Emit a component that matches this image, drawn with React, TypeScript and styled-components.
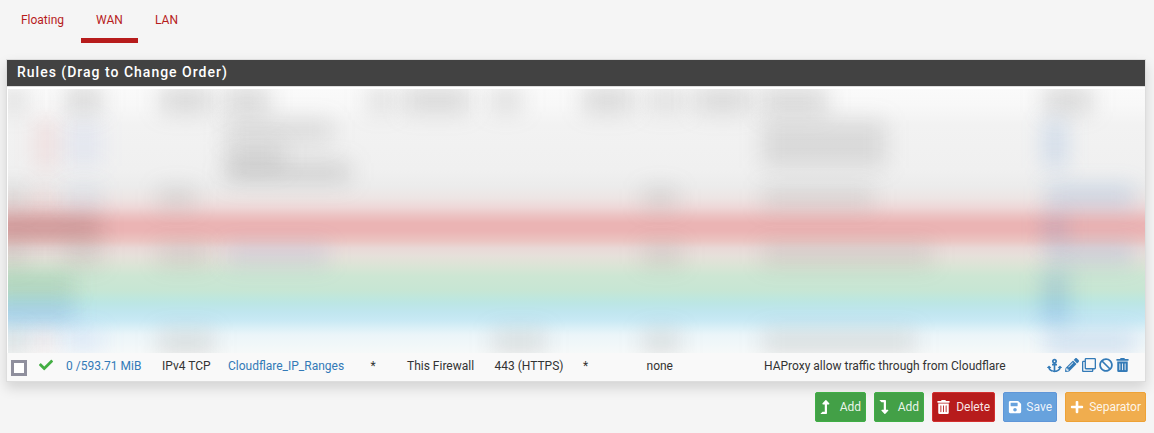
import React from "react";
import styled, { createGlobalStyle } from "styled-components";
import {
  FaAnchor, FaBan, FaCheck, FaLevelDownAlt, FaLevelUpAlt, FaPencilAlt,
  FaPlus, FaRegClone, FaSave, FaTrashAlt,
} from "react-icons/fa";

const GlobalStyle = createGlobalStyle`
  * { box-sizing: border-box; }
  body {
    margin: 0;
    background: #f5f5f5;
    font: 12px/18px Roboto, sans-serif;
    color: #333;
    overflow: hidden;
  }
`;

const Page = styled.main`
  width: 1154px;
  height: 433px;
  padding: 0 8px 0 6px;
`;

const Tabs = styled.nav`
  display: flex;
  height: 43px;
  margin-bottom: 16px;
`;

const Tab = styled.a<{ $width: number; $active?: boolean }>`
  width: ${(p) => p.$width}px;
  padding-top: 11px;
  text-align: center;
  color: #b71c1c;
  border-bottom: 5px solid ${(p) => (p.$active ? "#b71c1c" : "transparent")};
  &:first-child {
    padding-right: 2px;
  }
`;

const Panel = styled.section`
  width: 1140px;
  height: 323px;
  border: 1px solid #ddd;
  background: #fff;
  box-shadow: 0 6px 12px rgba(0, 0, 0, 0.14);
`;

const PanelHeading = styled.h2`
  margin: 0;
  height: 27px;
  padding: 0 10px;
  border-bottom: 1px solid #ddd;
  background: #424242;
  color: #fff;
  font-size: 14px;
  font-weight: 500;
  line-height: 25px;
  letter-spacing: 1px;
`;

const Redacted = styled.div`
  position: relative;
  overflow: hidden;
  height: 264px;
  margin: 2px 0 0 1px;
  background: linear-gradient(
    #fafafa 0px, #f8f8f8 16px, #f2f2f2 36px, #f0f0f0 80px, #ececec 97px,
    #ede5e4 109px, #eed8d8 118px, #ecc4c4 126px, #ebb4b4 134px,
    #ebb4b4 142px, #ebc5c2 152px, #e9d8d6 159px, #e6e0da 167px,
    #dce4d6 176px, #cde6d3 187px, #c7e6d4 201px, #c0e7dc 208px,
    #bce6e4 214px, #c0e6ef 223px, #c8e9f4 231px, #dbf0f7 239px,
    #ebf5f9 246px, #f6f9f9 264px
  );
`;

const Smudge = styled.span<{ $x: number; $y: number; $w: number; $h: number; $c: string }>`
  position: absolute;
  left: ${(p) => p.$x - 8}px;
  top: ${(p) => p.$y - 89}px;
  width: ${(p) => p.$w}px;
  height: ${(p) => p.$h}px;
  background: ${(p) => p.$c};
  filter: blur(11px);
`;

const Rule = styled.div`
  display: grid;
  grid-template-columns: 31.5px 27.5px 96px 66px 142.5px 36.5px 87.5px 88.5px 63.5px 117.5px 283px 1fr;
  height: 28px;
  background: #f9f9f9;
  padding-top: 4px;
  white-space: nowrap;
`;

const Cell = styled.span<{ $link?: boolean }>`
  color: ${(p) => (p.$link ? "#337ab7" : "#333")};
`;

const Checkbox = styled.span`
  width: 16px;
  height: 16px;
  margin: 3px 0 0 4px;
  border: 3px solid #8f8f9d;
  background: #fff;
`;

const Actions = styled.span`
  display: flex;
  align-items: center;
  height: 16px;
  gap: 3px;
  color: #337ab7;
`;

const TrashIcon = styled(FaTrashAlt)`
  width: 13px;
  height: 14px;
`;

const UpIcon = styled(FaLevelUpAlt)`
  width: 10px;
  height: 14px;
`;

const DownIcon = styled(FaLevelDownAlt)`
  width: 10px;
  height: 14px;
`;

const Buttons = styled.div`
  display: flex;
  justify-content: flex-end;
  gap: 8px;
  margin-top: 10px;
`;

const Button = styled.button<{ $w: number; $bg: string; $line: string }>`
  display: flex;
  align-items: center;
  justify-content: space-between;
  width: ${(p) => p.$w}px;
  height: 30px;
  padding: 0 4px;
  border: 1px solid ${(p) => p.$line};
  border-radius: 2px;
  background: ${(p) => p.$bg};
  color: rgba(255, 255, 255, 0.9);
  font: 12px/18px Roboto, sans-serif;
  svg { color: #fff; }
`;

const CheckMark = styled.span`
  color: #43ae43;
  padding-top: 1px;
  line-height: 0;
`;

const grey = "rgba(110,110,110,.25)";
const light = "rgba(110,110,110,.18)";
const blue = "rgba(60,120,200,.19)";
const smudges: [number, number, number, number, string][] = [
  [0, 88, 28, 24, light], [66, 88, 36, 24, grey], [160, 88, 52, 24, grey], [225, 88, 44, 24, grey],
  [367, 88, 28, 24, light], [404, 88, 66, 24, grey], [489, 88, 34, 24, light], [583, 88, 50, 24, grey],
  [645, 88, 42, 24, light], [695, 88, 56, 24, grey], [761, 88, 66, 24, grey], [1044, 88, 48, 24, grey],
  [226, 120, 106, 22, light], [226, 144, 58, 24, light], [226, 162, 124, 20, grey],
  [36, 120, 20, 48, "rgba(230,80,80,.12)"], [66, 122, 36, 44, "rgba(80,120,230,.08)"],
  [762, 120, 124, 48, light], [762, 188, 112, 20, light],
  [1044, 120, 22, 48, blue], [1046, 186, 88, 22, blue], [1044, 216, 22, 26, blue],
  [1046, 244, 88, 20, blue], [1043, 272, 25, 52, "rgba(60,120,200,.24)"], [1046, 332, 88, 22, blue],
  [0, 188, 26, 20, light], [34, 188, 20, 20, "rgba(230,80,80,.09)"], [64, 188, 38, 20, "rgba(60,120,200,.1)"], [158, 188, 38, 20, light],
  [642, 188, 36, 20, light], [-10, 216, 110, 24, "rgba(90,60,60,.22)"],
  [0, 245, 26, 20, light], [64, 245, 38, 20, light], [158, 245, 50, 20, light], [226, 245, 102, 20, "rgba(100,110,190,.17)"],
  [642, 245, 40, 20, light], [762, 245, 170, 20, light],
  [-10, 272, 84, 24, "rgba(60,130,80,.17)"], [-10, 300, 84, 22, "rgba(60,110,190,.2)"],
  [0, 330, 26, 26, light], [34, 330, 20, 22, "rgba(230,80,80,.12)"], [64, 330, 38, 22, "rgba(80,130,230,.12)"],
  [158, 330, 56, 26, light], [492, 330, 54, 24, light], [642, 330, 38, 24, light], [762, 330, 154, 24, light],
];

export default function App() {
  return (
    <Page>
      <GlobalStyle />
      <Tabs>
        <Tab $width={75}>Floating</Tab>
        <Tab $width={57} $active>WAN</Tab>
        <Tab $width={57}>LAN</Tab>
      </Tabs>
      <Panel>
        <PanelHeading>Rules (Drag to Change Order)</PanelHeading>
        <Redacted>
          {smudges.map(([x, y, w, h, c], i) => (
            <Smudge key={i} $x={x} $y={y} $w={w} $h={h} $c={c} />
          ))}
        </Redacted>
        <Rule>
          <Checkbox />
          <CheckMark><FaCheck size={14} /></CheckMark>
          <Cell $link>0 /593.71 MiB</Cell>
          <Cell>IPv4 TCP</Cell>
          <Cell $link>Cloudflare_IP_Ranges</Cell>
          <Cell>*</Cell>
          <Cell>This Firewall</Cell>
          <Cell>443 (HTTPS)</Cell>
          <Cell>*</Cell>
          <Cell>none</Cell>
          <Cell>HAProxy allow traffic through from Cloudflare</Cell>
          <Actions>
            <FaAnchor size={15} />
            <FaPencilAlt size={14} />
            <FaRegClone size={14} />
            <FaBan size={14} />
            <TrashIcon />
          </Actions>
        </Rule>
      </Panel>
      <Buttons>
        <Button $w={51} $bg="#43a047" $line="#3fae45"><UpIcon />Add</Button>
        <Button $w={50} $bg="#43a047" $line="#3fae45"><DownIcon />Add</Button>
        <Button $w={63} $bg="#b71c1c" $line="#d32f2f"><TrashIcon />Delete</Button>
        <Button $w={54} $bg="#67a2dd" $line="#5f96d8"><FaSave size={14} />Save</Button>
        <Button $w={81} $bg="#f0ad4e" $line="#eea236"><FaPlus size={14} />Separator</Button>
      </Buttons>
    </Page>
  );
}
